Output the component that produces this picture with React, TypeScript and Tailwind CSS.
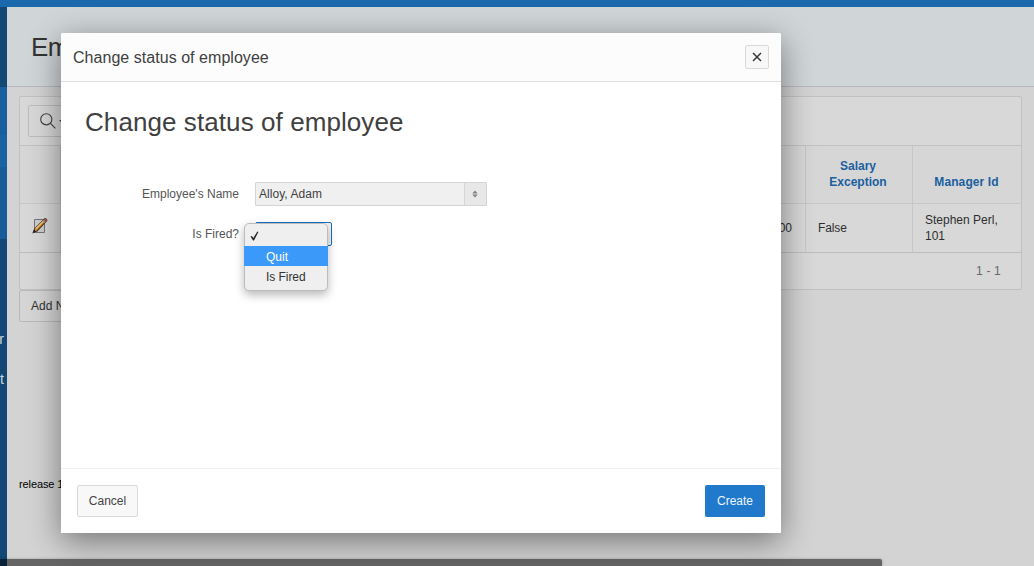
import type { ReactNode } from "react";

function Sidebar() {
  return (
    <nav className="flex w-[7px] shrink-0 flex-col overflow-hidden bg-[#134875] text-sm text-[#ccd6df]">
      <div className="h-[80px] shrink-0" />
      <div className="h-12 shrink-0 bg-[#185f9f]" />
      <div className="h-8 shrink-0 bg-[#1963a3]" />
      <div className="h-[72px] shrink-0 bg-[#185b99]" />
      <div className="mt-20 flex h-10 shrink-0 items-center justify-end pr-[3px]">r</div>
      <div className="flex h-10 shrink-0 items-center justify-end pr-[3px]">t</div>
    </nav>
  );
}

function SearchIcon() {
  return (
    <svg width="16" height="16" viewBox="0 0 16 16" fill="none" stroke="#404040" strokeWidth="1.1">
      <circle cx="6.3" cy="6.3" r="5.6" />
      <path d="m10.4 10.4 5 5" />
    </svg>
  );
}

function EditIcon() {
  return (
    <svg width="17" height="16" viewBox="0 0 17 16" fill="none">
      <path d="M2.5 1.5h10v13h-10z" fill="#cdcdcd" stroke="#747474" />
      <path d="M1.2 14.6 2.8 10.7 12.6.9c.8-.7 2.8.9 2 2L5.1 13Z" fill="#e09b24" stroke="#4a3730" strokeWidth="1.1" />
      <path d="m3.7 10.9 8.1-8.2" stroke="#edd184" strokeWidth="1.1" />
      <path d="m5 12.2 8-8.4" stroke="#a95820" strokeWidth=".9" />
      <path d="m11.4 2.1 1.2-1.2c.8-.7 2.8.9 2 2l-1.3 1.3Z" fill="#a7564f" />
      <path d="m11 2.6 2.2 2" stroke="#969696" strokeWidth="1.2" />
      <path d="m.8 15 1.2-3.5 2.2 2.1Z" fill="#222" />
    </svg>
  );
}

function Report() {
  return (
    <section className="h-[194px] w-[1003px] rounded-[2px] border border-[#c1c1c1] bg-[#d8d8d8] text-xs leading-4 text-[#2e2e2e]">
      <div className="flex h-[49px] items-start border-b border-[#c1c1c1] pt-2 pl-2">
        <div className="flex h-8 w-16 items-center rounded-[2px] border border-[#bcbcbc] pl-[11px]">
          <SearchIcon />
          <span className="ml-[3px] h-0 w-0 border-x-[3px] border-t-[3px] border-x-transparent border-t-[#444]" />
        </div>
      </div>
      <div className="grid h-[58px] grid-cols-[41px_745px_107px_108px] border-b border-[#c7c7c7] bg-[#d6d6d6] text-center text-[12px] font-bold text-[#1b5f9f]">
        <div className="border-r border-[#bfbfbf]" />
        <div className="border-r border-[#c4c4c4]" />
        <div className="flex items-end justify-center border-r border-[#c7c7c7] pr-[21px] pb-[13px] pl-[19px]">Salary Exception</div>
        <div className="flex items-end justify-center pr-px pb-[13px] tracking-[0.1px]">Manager Id</div>
      </div>
      <div className="grid h-[49px] grid-cols-[41px_745px_107px_108px] border-b border-[#bdbdbd]">
        <div className="flex items-center border-r border-[#c7c7c7] pb-1 pl-3"><EditIcon /></div>
        <div className="flex items-center justify-end border-r border-[#c7c7c7] pr-[13px]">5,000</div>
        <div className="flex items-center border-r border-[#c7c7c7] pl-3 tracking-[-0.1px]">False</div>
        <div className="flex items-center pr-2 pl-3">Stephen Perl, 101</div>
      </div>
      <div className="flex h-9 items-center justify-end pr-5 tracking-[0.2px] text-[#696969]">1 - 1</div>
    </section>
  );
}

function Page() {
  return (
    <div className="flex h-full flex-col">
      <div className="h-[7px] shrink-0 bg-[#1b69ad]" />
      <div className="flex min-h-0 grow">
        <Sidebar />
        <main className="flex grow flex-col">
          <header className="flex h-20 shrink-0 items-center border-b border-[#b8b9bd] bg-[#d0d5d8] pt-[2px] pl-6 text-[26px] text-[#333]">
            <span className="w-[34px] overflow-hidden tracking-[-0.5px]">Employees</span>
          </header>
          <div className="flex grow flex-col items-start pt-[9px] pl-3">
            <Report />
            <button className="h-8 w-[90px] rounded-[2px] border border-[#b9b9b9] bg-[#d5d5d5] pl-[11px] text-left text-xs text-[#303030]">Add New</button>
            <footer className="mt-[154px] text-[11px] leading-4 tracking-[-0.1px] text-black">release 1.0</footer>
          </div>
        </main>
      </div>
    </div>
  );
}

function Field({ label, children }: { label: string; children: ReactNode }) {
  return (
    <div className="flex h-10 items-center">
      <label className="w-[178px] text-right text-xs text-[#555]">{label}</label>
      <div className="ml-4">{children}</div>
    </div>
  );
}

function StatusMenu() {
  return (
    <div className="absolute top-0 -left-[12px] h-[68px] w-[84px] rounded-[5px] border border-[#bcbcbc] bg-[#efefef] pt-[2px] text-xs text-[#333] shadow-[0_4px_10px_rgba(0,0,0,0.28)]">
      <div className="flex h-5 items-center pl-[5px]">
        <svg width="9" height="10" viewBox="0 0 9 10"><path d="M.5 5.6 2 4.9l1.3 2L7.4.4l1 .5L4 9.5H3Z" fill="#292929" /></svg>
      </div>
      <div className="-mx-px flex h-5 items-center bg-[#3b99f9] pt-px pl-[22px] text-white">Quit</div>
      <div className="flex h-[21px] items-center pl-[21px] tracking-[-0.05px]">Is Fired</div>
    </div>
  );
}

function Dialog() {
  return (
    <div role="dialog" className="absolute top-[33px] left-[61px] flex h-[500px] w-[720px] flex-col rounded-t-[2px] bg-white shadow-[0_8px_32px_rgba(0,0,0,0.45)]">
      <header className="flex h-[49px] shrink-0 items-center justify-between rounded-t-[2px] border-b border-[#dfdfdf] bg-[#fcfcfc] px-3 text-base text-[#404040]">
        <span className="pt-px tracking-[0.04px]">Change status of employee</span>
        <button className="flex h-6 w-6 items-center justify-center rounded-[2px] border border-[#d9d9d9] bg-[#f8f8f8]" aria-label="Close">
          <svg width="10" height="10" viewBox="0 0 10 10"><path d="m1 1 8 8m0-8-8 8" stroke="#383838" strokeWidth="1.5" /></svg>
        </button>
      </header>
      <div className="grow">
        <h1 className="mt-5 pl-6 text-[26px] leading-10 tracking-[0.08px] text-[#404040]">Change status of employee</h1>
        <form className="mt-8">
          <Field label="Employee's Name">
            <div className="flex h-6 w-[232px] rounded-[1px] border border-[#d5d5d5] bg-[#f0f0f0] text-xs text-[#404040]">
              <span className="flex grow items-center pl-[3px] tracking-[0.05px]">Alloy, Adam</span>
              <span className="flex w-[22px] items-center justify-center border-l border-[#d5d5d5] bg-[#e8e8e8] pr-px">
                <svg width="6" height="8" viewBox="0 0 6 8" fill="#808080"><path d="M3 .5 5.7 3.5H.3ZM3 7.5.3 4.5h5.4Z" /></svg>
              </span>
            </div>
          </Field>
          <Field label="Is Fired?">
            <div className="relative h-6 w-[77px] rounded-[2px] border border-[#176fc1] bg-[#f3f3f3]"><StatusMenu /></div>
          </Field>
        </form>
      </div>
      <footer className="flex h-[65px] shrink-0 items-center justify-between border-t border-[#f0f0f0] px-4 text-xs">
        <button className="h-8 w-[61px] rounded-[2px] border border-[#d9d9d9] bg-[#f8f8f8] text-[#444]">Cancel</button>
        <button className="h-8 w-[60px] rounded-[2px] bg-[#2079ca] text-[#eef6ff]">Create</button>
      </footer>
    </div>
  );
}

export default function App() {
  return (
    <div className="relative h-screen w-screen overflow-hidden bg-[#d3d3d3] font-['Liberation_Sans',sans-serif]">
      <Page />
      <Dialog />
      <div className="absolute bottom-0 left-0 h-[7px] w-[882px] rounded-tr-[2px] bg-black/52 shadow-[0_0_3px_rgba(0,0,0,0.25)]" />
    </div>
  );
}
